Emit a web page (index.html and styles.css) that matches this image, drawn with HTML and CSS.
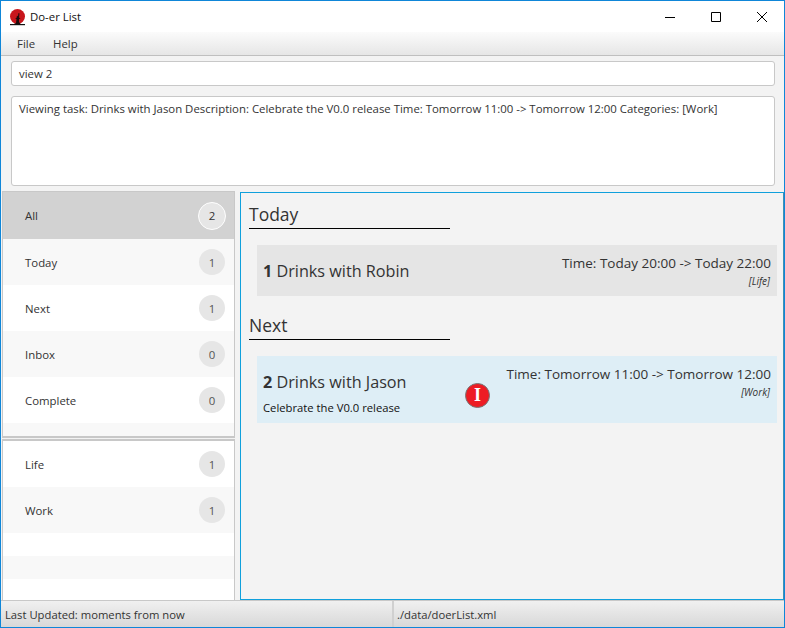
FILE: index.html
```html
<!DOCTYPE html>
<html lang="en">
<head>
  <meta charset="UTF-8">
  <title>Do-er List</title>
  <link rel="stylesheet" href="styles.css">
</head>
<body>
  <div class="window">
    <div class="title-bar">
      <svg class="app-icon" width="17" height="18" viewBox="0 0 17 18">
        <circle cx="8.500" cy="8.500" r="7.500" fill="#c8161c"/>
        <path d="M1 16h15v1.200H1z" fill="#111"/>
        <path d="M5 16l2-1 .5-4-1.500-.5 1.500-.5.500-2.500 1 1 .5-3.500 1 .5-.5 4 1.500 1-1.500.5v3l1.500 2z" fill="#1a0a0a"/>
      </svg>
      <span class="title-text">Do-er List</span>
      <div class="window-buttons">
        <svg width="12" height="12" viewBox="0 0 12 12"><path d="M1 6.500h10" stroke="#000" fill="none"/></svg>
        <svg width="12" height="12" viewBox="0 0 12 12"><path d="M1.500 1.500h9v9h-9z" stroke="#000" fill="none"/></svg>
        <svg width="12" height="12" viewBox="0 0 12 12"><path d="M1 1l10 10M11 1L1 11" stroke="#000" fill="none"/></svg>
      </div>
    </div>

    <div class="menu-bar">
      <span>File</span>
      <span>Help</span>
    </div>

    <div class="command-wrap">
      <div class="command-box">view 2</div>
    </div>
    <div class="result-wrap">
      <div class="result-box">Viewing task: Drinks with Jason Description: Celebrate the V0.0 release Time: Tomorrow 11:00 -&gt; Tomorrow 12:00 Categories: [Work]</div>
    </div>

    <div class="main">
      <div class="sidebar">
        <div class="list list-top">
          <div class="list-item selected"><span>All</span><span class="count">2</span></div>
          <div class="list-item alt"><span>Today</span><span class="count">1</span></div>
          <div class="list-item"><span>Next</span><span class="count">1</span></div>
          <div class="list-item alt"><span>Inbox</span><span class="count">0</span></div>
          <div class="list-item"><span>Complete</span><span class="count">0</span></div>
          <div class="list-fill alt"></div>
        </div>
        <div class="list list-bottom">
          <div class="list-item"><span>Life</span><span class="count">1</span></div>
          <div class="list-item alt"><span>Work</span><span class="count">1</span></div>
          <div class="list-gap"></div>
          <div class="list-gap alt"></div>
          <div class="list-gap"></div>
        </div>
      </div>

      <div class="content">
        <h2 class="section-title">Today</h2>
        <div class="task task-today">
          <div class="task-left">
            <div class="task-name"><b>1</b> Drinks with Robin</div>
          </div>
          <div class="task-right">
            <div class="task-time">Time: Today 20:00 -&gt; Today 22:00</div>
            <div class="task-tag">[Life]</div>
          </div>
        </div>

        <h2 class="section-title section-next">Next</h2>
        <div class="task task-selected">
          <div class="task-left">
            <div class="task-name"><b>2</b> Drinks with Jason</div>
            <div class="task-desc">Celebrate the V0.0 release</div>
          </div>
          <div class="task-right">
            <div class="task-time">Time: Tomorrow 11:00 -&gt; Tomorrow 12:00</div>
            <div class="task-tag">[Work]</div>
          </div>
          <span class="marker">I</span>
        </div>
      </div>
    </div>

    <div class="status-bar">
      <div class="status-left">Last Updated: moments from now</div>
      <div class="status-right">./data/doerList.xml</div>
    </div>
  </div>
</body>
</html>
```

FILE: styles.css
```css
* {
  box-sizing: border-box;
}
html, body {
  margin: 0;
  height: 100%;
}
body {
  font-family: "Open Sans", "Noto Sans", sans-serif;
  font-size: 11.4px;
  color: #333;
}
.window {
  height: 628px;
  display: flex;
  flex-direction: column;
  border: 1px solid #0f86d8;
  background: #f3f3f3;
}
.title-bar {
  height: 31px;
  flex: none;
  display: flex;
  align-items: center;
  background: #fff;
  padding-left: 8px;
  color: #111;
}
.app-icon {
  flex: none;
}
.title-text {
  margin-left: 4px;
}
.window-buttons {
  margin-left: auto;
  display: flex;
  gap: 34px;
  padding-right: 16px;
}
.window-buttons svg {
  display: block;
}
.menu-bar {
  height: 24px;
  flex: none;
  display: flex;
  align-items: center;
  gap: 18px;
  padding-left: 16px;
  background: linear-gradient(#fbfbfb, #e6e6e6);
  border-bottom: 1px solid #bfbfbf;
}
.command-wrap {
  padding: 5px 9px 0 10px;
  flex: none;
}
.command-box {
  height: 25px;
  padding: 0 7px;
  line-height: 23px;
  background: #fff;
  border: 1px solid #c8c8c8;
  border-radius: 3px;
}
.result-wrap {
  padding: 10px 9px 5px 10px;
  flex: none;
}
.result-box {
  height: 90px;
  padding: 4px 7px;
  line-height: 16px;
  background: #fff;
  border: 1px solid #c8c8c8;
  border-radius: 3px;
  white-space: nowrap;
  overflow: hidden;
}
.main {
  flex: 1;
  min-height: 0;
  display: flex;
}
.sidebar {
  width: 233px;
  flex: none;
  margin-left: 1px;
  display: flex;
  flex-direction: column;
  border-top: 1px solid #c8c8c8;
}
.list {
  background: #fff;
  border-right: 1px solid #c8c8c8;
  border-left: 1px solid #c8c8c8;
}
.list-top {
  height: 246px;
  flex: none;
  border-bottom: 2px solid #c8c8c8;
}
.list-bottom {
  flex: 1;
  margin-top: 1px;
  border-top: 2px solid #c8c8c8;
  border-bottom: 1px solid #c8c8c8;
}
.list-item {
  height: 46px;
  display: flex;
  align-items: center;
  justify-content: space-between;
  padding: 0 9px 0 22px;
  background: #fff;
}
.list-item.alt, .list-fill.alt, .list-gap.alt {
  background: #f8f8f8;
}
.list-item.selected {
  height: 47px;
  background: #d2d2d2;
}
.list-fill {
  height: 13px;
}
.list-gap {
  height: 23px;
}
.count {
  width: 26px;
  height: 26px;
  border-radius: 50%;
  background: #e6e6e6;
  display: flex;
  align-items: center;
  justify-content: center;
  color: #555;
}
.selected .count {
  width: 28px;
  height: 28px;
  margin-right: -1px;
  border: 1px solid #fff;
  color: #333;
}
.content {
  flex: 1;
  min-width: 0;
  margin: 1px 0 0 5px;
  border: 1px solid #0fa0dc;
  border-right-color: #3f8fb5;
  background: #f3f3f3;
  padding: 0 6px 0 8px;
}
.section-title {
  width: 201px;
  height: 36px;
  margin: 0;
  padding-top: 10px;
  font-size: 17.500px;
  font-weight: 400;
  line-height: 23px;
  border-bottom: 1px solid #000;
}
.section-next {
  height: 35px;
  margin-top: 9px;
  padding-top: 9px;
}
.task {
  position: relative;
  display: flex;
  justify-content: space-between;
  margin: 16px 0 0 8px;
  padding: 0 6px;
}
.task-today {
  height: 51px;
  background: #e5e5e5;
  align-items: flex-start;
}
.task-selected {
  height: 67px;
  background: #deeef6;
}
.task-name {
  font-size: 16.200px;
  line-height: 22px;
  margin-top: 15px;
}
.task-desc {
  font-size: 11.250px;
  line-height: 16px;
  margin-top: 7px;
  color: #111;
}
.task-right {
  text-align: right;
}
.task-time {
  font-size: 13.500px;
  line-height: 18px;
  margin-top: 9px;
}
.task-tag {
  font-size: 10px;
  font-style: italic;
  line-height: 12px;
  margin: 3px 1px 0 0;
}
.marker {
  position: absolute;
  left: 208px;
  top: 27px;
  width: 25px;
  height: 25px;
  border-radius: 50%;
  background: #ed1c24;
  border: 1px solid #777;
  color: #fff;
  font-family: "Liberation Serif", serif;
  font-size: 18px;
  font-weight: 700;
  line-height: 23px;
  text-align: center;
}
.status-bar {
  height: 27px;
  flex: none;
  display: flex;
  align-items: center;
  font-size: 11.250px;
  background: linear-gradient(#f0f0f0, #d8d8d8);
  border-top: 1px solid #c8c8c8;
}
.status-left {
  width: 391px;
  padding: 1px 0 0 4px;
}
.status-right {
  flex: 1;
  height: 100%;
  line-height: 27px;
  padding-left: 3px;
  border-left: 2px solid #d0d0d0;
}
```
